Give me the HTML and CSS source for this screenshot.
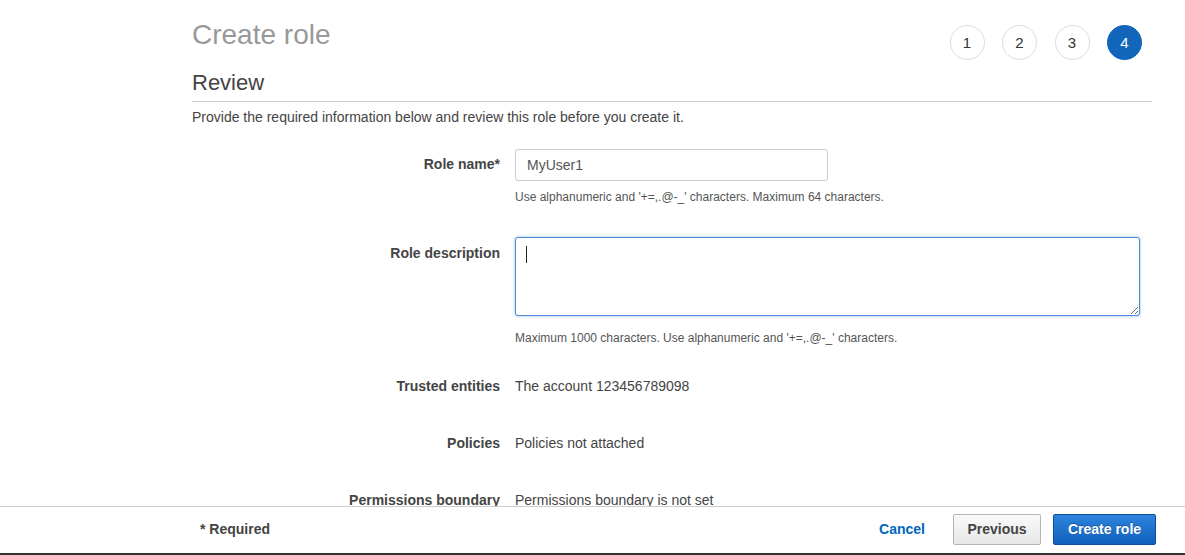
FILE: index.html
```html
<!DOCTYPE html>
<html>
<head>
<meta charset="utf-8">
<link rel="stylesheet" href="styles.css">
</head>
<body>
<div class="page">
  <div class="header">
    <h1 class="title">Create role</h1>
    <div class="steps">
      <span class="step">1</span>
      <span class="step">2</span>
      <span class="step">3</span>
      <span class="step active">4</span>
    </div>
  </div>
  <h2 class="subtitle">Review</h2>
  <p class="intro">Provide the required information below and review this role before you create it.</p>

  <div class="form">
    <div class="row row-name">
      <div class="label label-input">Role name*</div>
      <div class="value">
        <input class="text-input" type="text" value="MyUser1">
        <div class="help help-name">Use alphanumeric and '+=,.@-_' characters. Maximum 64 characters.</div>
      </div>
    </div>
    <div class="row row-desc">
      <div class="label label-desc">Role description</div>
      <div class="value">
        <div class="area-wrap">
          <textarea class="text-area"></textarea>
          <span class="caret"></span>
        </div>
        <div class="help help-desc">Maximum 1000 characters. Use alphanumeric and '+=,.@-_' characters.</div>
      </div>
    </div>
    <div class="row row-info first">
      <div class="label">Trusted entities</div>
      <div class="value text">The account 123456789098</div>
    </div>
    <div class="row row-info">
      <div class="label">Policies</div>
      <div class="value text">Policies not attached</div>
    </div>
    <div class="row row-info">
      <div class="label">Permissions boundary</div>
      <div class="value text">Permissions boundary is not set</div>
    </div>
  </div>
</div>

<div class="footer">
  <span class="required">* Required</span>
  <div class="actions">
    <a class="cancel">Cancel</a>
    <button class="btn btn-secondary">Previous</button>
    <button class="btn btn-primary">Create role</button>
  </div>
</div>
</body>
</html>
```

FILE: styles.css
```css
html, body {
  margin: 0;
  padding: 0;
  background: #fff;
}
body {
  font-family: "Liberation Sans", Arial, sans-serif;
  color: #444;
  height: 555px;
  overflow: hidden;
}
.page {
  padding: 0 33px 0 192px;
}
.header {
  display: flex;
  justify-content: space-between;
  align-items: flex-start;
}
.title {
  margin: 19px 0 0 0;
  font-size: 28px;
  line-height: 32px;
  font-weight: normal;
  color: #999;
}
.steps {
  display: flex;
  gap: 17.5px;
  margin: 25px 10px 0 0;
}
.step {
  width: 33px;
  height: 33px;
  border: 1px solid #ddd;
  border-radius: 50%;
  display: flex;
  align-items: center;
  justify-content: center;
  font-size: 15px;
  color: #333;
}
.step.active {
  background: #1166bb;
  border-color: #1166bb;
  color: #fff;
}
.subtitle {
  margin: 10px 0 0 0;
  font-size: 22px;
  line-height: 26px;
  font-weight: normal;
  color: #444;
  padding-bottom: 5px;
  border-bottom: 1px solid #ccc;
}
.intro {
  margin: 7px 0 0 0;
  font-size: 14px;
  line-height: 16px;
  color: #444;
}
.form {
  margin-top: 24px;
}
.row {
  display: grid;
  grid-template-columns: 308px 1fr;
  column-gap: 15px;
}
.label {
  text-align: right;
  font-weight: bold;
  font-size: 14px;
  line-height: 20px;
  color: #444;
}
.label-input {
  line-height: 30px;
}
.label-desc {
  padding-top: 6px;
}
.text-input {
  box-sizing: border-box;
  width: 313px;
  height: 32px;
  border: 1px solid #ccc;
  border-radius: 3px;
  padding: 0 11px;
  font-family: "Liberation Sans", Arial, sans-serif;
  font-size: 14px;
  color: #555;
  display: block;
  margin: 0;
}
.help {
  font-size: 12px;
  line-height: 16px;
  color: #555;
}
.help-name {
  margin-top: 8px;
}
.row-desc {
  margin-top: 32px;
}
.area-wrap {
  position: relative;
  width: 625px;
  height: 79px;
}
.text-area {
  box-sizing: border-box;
  display: block;
  width: 625px;
  height: 79px;
  margin: 0;
  border: 1px solid #4a8ad6;
  border-radius: 3px;
  box-shadow: 0 0 3px rgba(77, 144, 230, 0.6);
  outline: none;
  font-family: "Liberation Sans", Arial, sans-serif;
  font-size: 14px;
  padding: 8px 10px;
}
.caret {
  position: absolute;
  left: 11px;
  top: 9px;
  width: 1px;
  height: 17px;
  background: #222;
}
.help-desc {
  margin-top: 14px;
}
.row-info.first {
  margin-top: 30px;
}
.row-info {
  margin-top: 37px;
}
.text {
  font-size: 14px;
  line-height: 20px;
  color: #444;
}
.footer {
  position: fixed;
  left: 0;
  right: 0;
  bottom: 0;
  box-sizing: border-box;
  height: 49px;
  background: #fff;
  border-top: 1px solid #ccc;
  border-bottom: 2px solid #333;
  display: flex;
  align-items: center;
  justify-content: space-between;
  padding: 0 29px 2px 200px;
}
.required {
  font-weight: bold;
  font-size: 14px;
  color: #444;
}
.actions {
  display: flex;
  align-items: center;
}
.cancel {
  color: #0066bb;
  font-weight: bold;
  font-size: 14px;
  margin-right: 28px;
  cursor: pointer;
}
.btn {
  box-sizing: border-box;
  height: 31px;
  border-radius: 2px;
  font-family: "Liberation Sans", Arial, sans-serif;
  font-weight: bold;
  font-size: 14px;
  padding: 0;
  margin: 0;
}
.btn-secondary {
  width: 88px;
  background: linear-gradient(#fafafa, #e6e6e6);
  border: 1px solid #b5b5b5;
  color: #444;
  margin-right: 12px;
}
.btn-primary {
  width: 103px;
  background: linear-gradient(#2e84dc, #1060bd);
  border: 1px solid #0c4f9c;
  color: #fff;
  text-shadow: 0 -1px 0 rgba(0, 0, 0, 0.3);
}
```
